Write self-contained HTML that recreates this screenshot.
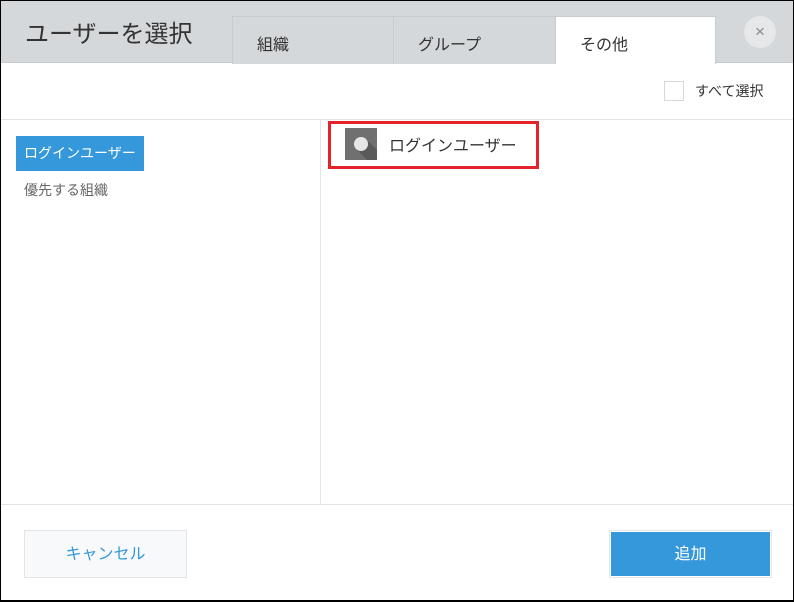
<!DOCTYPE html>
<html><head><meta charset="utf-8"><style>
*{margin:0;padding:0;box-sizing:border-box}
body{width:794px;height:602px;background:#fff;font-family:"Liberation Sans","Noto Sans CJK JP",sans-serif;position:relative;overflow:hidden}
.frame{position:absolute;left:0;top:0;width:794px;height:602px;border:1px solid #000;border-bottom-width:2px}
.hdr{position:absolute;left:1px;top:1px;width:792px;height:62px;background:#d5d8da;border-bottom:1px solid #c8cbcd}
.title{position:absolute;left:24px;top:13px;font-size:24px;color:#333}
.tab{position:absolute;top:16px;height:48px;border:1px solid #c9cccf;border-bottom:none;background:#d5d8da;font-size:16px;color:#333;padding-top:14px}
.x{position:absolute;left:744px;top:16px;width:32px;height:32px;border-radius:50%;background:#e6e7e8;color:#888;text-align:center;line-height:31px;font-size:17px}
.abs{position:absolute}
</style></head><body>
<div class="hdr">
<div class="title">ユーザーを選択</div>
</div>
<div class="tab" style="left:232px;width:162px;padding-left:24px">組織</div>
<div class="tab" style="left:393px;width:163px;padding-left:24px">グループ</div>
<div class="tab" style="left:555px;width:161px;background:#fff;padding-left:24px">その他</div>
<div class="x">×</div>
<div class="abs" style="left:664px;top:81px;width:20px;height:20px;border:1px solid #d6d8da"></div>
<div class="abs" style="left:695px;top:81px;font-size:14px;color:#333">すべて選択</div>
<div class="abs" style="left:1px;top:119px;width:792px;height:1px;background:#e3e3e3"></div>
<div class="abs" style="left:320px;top:120px;width:1px;height:384px;background:#e3e3e3"></div>
<div class="abs" style="left:1px;top:504px;width:792px;height:1px;background:#e3e3e3"></div>
<div class="abs" style="left:16px;top:136px;width:128px;height:35px;background:#3498db;color:#fff;font-size:14px;line-height:35px;padding-left:8px">ログインユーザー</div>
<div class="abs" style="left:24px;top:180px;font-size:14px;color:#666">優先する組織</div>
<div class="abs" style="left:328px;top:121px;width:211px;height:48px;border:3px solid #e4222a"></div>
<svg class="abs" style="left:345px;top:128px" width="32" height="32" viewBox="0 0 32 32">
<rect width="32" height="32" fill="#707070"/>
<polygon points="11,21 21,11 32,22 32,32 22,32" fill="#5a5a5a"/>
<circle cx="16" cy="16" r="7" fill="#e6e6e6"/>
</svg>
<div class="abs" style="left:389px;top:132px;font-size:16px;color:#333">ログインユーザー</div>
<div class="abs" style="left:24px;top:530px;width:163px;height:48px;border:1px solid #e3e5e6;background:#f7f9fa;color:#3498db;font-size:16px;text-align:center;line-height:48px">キャンセル</div>
<div class="abs" style="left:609px;top:530px;width:163px;height:48px;border:1px solid #e3e5e6;background:#fff"><div style="margin:1px;height:44px;background:#3498db;color:#fff;font-size:16px;text-align:center;line-height:46px">追加</div></div>
<div class="frame"></div>
</body></html>
